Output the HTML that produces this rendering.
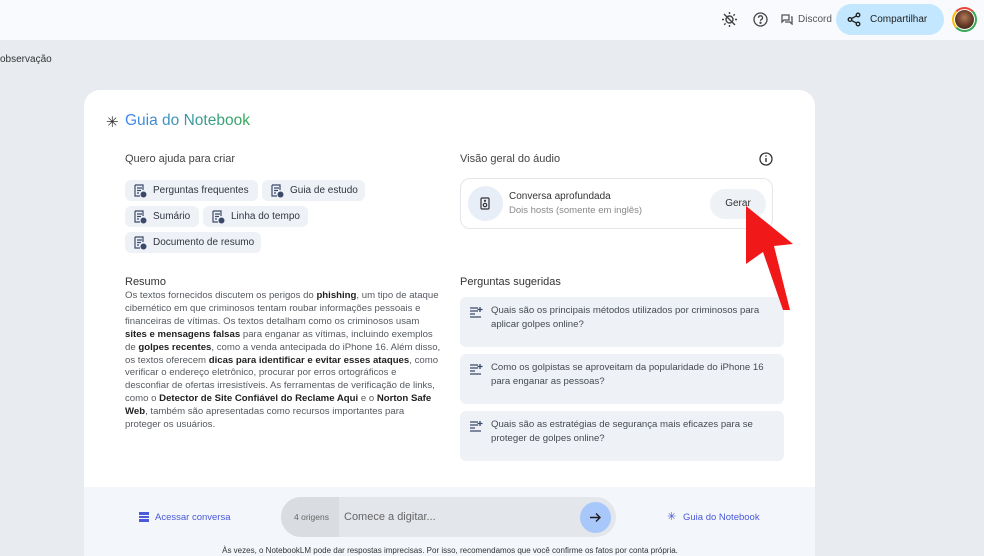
<!DOCTYPE html>
<html><head><meta charset="utf-8"><style>
*{box-sizing:border-box;margin:0;padding:0}
html,body{width:984px;height:556px;overflow:hidden}
body{background:#e8ebf0;font-family:"Liberation Sans",sans-serif;position:relative;color:#1f1f1f}
.hdr{position:absolute;left:0;top:0;width:984px;height:40px;background:#f8fafd}
.abs{position:absolute}
.card{position:absolute;left:84px;top:90px;width:731px;height:466px;background:#fff;border-radius:16px 16px 0 0;overflow:hidden}
.chip{position:absolute;height:21px;background:#eef1f6;border-radius:6px;font-size:10px;color:#303640;line-height:21px;padding-left:28px}
.chip svg{position:absolute;left:9px;top:4px}
.sum{position:absolute;left:125px;top:290px;font-size:9.6px;line-height:12.9px;color:#555a60;white-space:nowrap}
.sum b{color:#1f1f1f}
.q{position:absolute;left:460px;width:324px;height:50px;background:#eef1f6;border-radius:6px;font-size:9.6px;line-height:14px;color:#454a52;padding:7px 0 0 31px}
.q svg{position:absolute;left:9px;top:9px}
</style></head><body>
<div class="hdr"></div>
<svg class="abs" style="left:721px;top:11px" width="17" height="17" viewBox="0 0 17 17" fill="none" stroke="#444" stroke-width="1.4"><circle cx="8.5" cy="8.5" r="3.5"/><path d="M8.5 1v2M8.5 14v2M1 8.5h2M14 8.5h2M3.2 3.2l1.4 1.4M12.4 12.4l1.4 1.4M3.2 13.8l1.4-1.4M12.4 4.6l1.4-1.4M3 3l11 11"/></svg>
<svg class="abs" style="left:753px;top:12px" width="15" height="15" viewBox="0 0 15 15" fill="none" stroke="#444" stroke-width="1.3"><circle cx="7.5" cy="7.5" r="6.5"/><path d="M5.5 5.8a2 2 0 1 1 2.6 1.9c-.5.2-.6.6-.6 1.2"/><circle cx="7.5" cy="10.8" r=".5" fill="#444"/></svg>
<svg class="abs" style="left:781px;top:14px" width="12" height="11" viewBox="0 0 12 11" fill="none" stroke="#555" stroke-width="1.3"><path d="M1 1h7v5H3L1 8z M10 3h1v7l-2-2H4"/></svg>
<div class="abs" style="left:798px;top:13px;font-size:10px;line-height:13px;color:#555">Discord</div>
<div class="abs" style="left:836px;top:4px;width:108px;height:31px;border-radius:16px;background:#c2e7ff"></div>
<svg class="abs" style="left:847px;top:12px" width="14" height="15" viewBox="0 0 14 15" fill="none" stroke="#1f1f1f" stroke-width="1.3"><circle cx="11" cy="3" r="1.8"/><circle cx="3" cy="7.5" r="1.8"/><circle cx="11" cy="12" r="1.8"/><path d="M4.6 6.6l4.8-2.7M4.6 8.4l4.8 2.7"/></svg>
<div class="abs" style="left:870px;top:13px;font-size:10px;line-height:13px;color:#1f1f1f">Compartilhar</div>
<div class="abs" style="left:952px;top:7px;width:25px;height:25px;border-radius:50%;border:2px solid #34a853;border-top-color:#ea4335;border-left-color:#fbbc04;background:#fff;padding:1px"><div style="width:100%;height:100%;border-radius:50%;background:radial-gradient(circle at 50% 40%,#b07a5a 0,#6a3f2a 50%,#2a1a12 100%)"></div></div>
<div class="abs" style="left:0;top:54px;font-size:10px;color:#333">observação</div>

<div class="card">
<div class="abs" style="left:0;top:397px;width:731px;height:90px;background:#f3f6fb"></div>
</div>
<div class="abs" style="left:106px;top:113px;font-size:15px;color:#333">✳</div>
<div class="abs" style="left:125px;top:112px;font-size:15.5px;background:linear-gradient(90deg,#4285f4,#34a853);-webkit-background-clip:text;color:transparent">Guia do Notebook</div>
<div class="abs" style="left:125px;top:153px;font-size:11px;color:#444">Quero ajuda para criar</div>
<svg width="0" height="0" style="position:absolute"><defs><g id="doc"><path d="M1 1h8v5M1 1v11h5M3 4h5M3 6.5h4M3 9h2" fill="none" stroke="#3b4a6b" stroke-width="1.2"/><circle cx="9.5" cy="10.5" r="3" fill="#3b4a6b"/></g><g id="qi"><path d="M1 2h8M1 5h8M1 8h5M1 11h11M11 1v5M8.5 3.5h5" fill="none" stroke="#3b4a6b" stroke-width="1.3"/></g></defs></svg>
<div class="chip" style="left:125px;top:180px;width:133px"><svg width="14" height="14"><use href="#doc"/></svg>Perguntas frequentes</div>
<div class="chip" style="left:262px;top:180px;width:103px"><svg width="14" height="14"><use href="#doc"/></svg>Guia de estudo</div>
<div class="chip" style="left:125px;top:206px;width:74px"><svg width="14" height="14"><use href="#doc"/></svg>Sumário</div>
<div class="chip" style="left:203px;top:206px;width:105px"><svg width="14" height="14"><use href="#doc"/></svg>Linha do tempo</div>
<div class="chip" style="left:125px;top:232px;width:136px"><svg width="14" height="14"><use href="#doc"/></svg>Documento de resumo</div>

<div class="abs" style="left:125px;top:276px;font-size:11px;color:#333">Resumo</div>
<div class="sum">Os textos fornecidos discutem os perigos do <b>phishing</b>, um tipo de ataque<br>cibernético em que criminosos tentam roubar informações pessoais e<br>financeiras de vítimas. Os textos detalham como os criminosos usam<br><b>sites e mensagens falsas</b> para enganar as vítimas, incluindo exemplos<br>de <b>golpes recentes</b>, como a venda antecipada do iPhone 16. Além disso,<br>os textos oferecem <b>dicas para identificar e evitar esses ataques</b>, como<br>verificar o endereço eletrônico, procurar por erros ortográficos e<br>desconfiar de ofertas irresistíveis. As ferramentas de verificação de links,<br>como o <b>Detector de Site Confiável do Reclame Aqui</b> e o <b>Norton Safe<br>Web</b>, também são apresentadas como recursos importantes para<br>proteger os usuários.</div>

<div class="abs" style="left:460px;top:153px;font-size:11px;color:#444">Visão geral do áudio</div>
<svg class="abs" style="left:759px;top:152px" width="14" height="14" viewBox="0 0 14 14"><circle cx="7" cy="7" r="6" fill="none" stroke="#333" stroke-width="1.3"/><path d="M7 6v4" stroke="#333" stroke-width="1.4"/><circle cx="7" cy="4" r=".8" fill="#333"/></svg>
<div class="abs" style="left:460px;top:178px;width:313px;height:51px;border:1px solid #e3e6ea;border-radius:10px"></div>
<div class="abs" style="left:468px;top:186px;width:35px;height:35px;border-radius:50%;background:#e8eef8"></div>
<svg class="abs" style="left:480px;top:197px" width="10" height="13" viewBox="0 0 10 13" fill="none" stroke="#333" stroke-width="1.2"><rect x="1" y="1" width="8" height="11" rx="1"/><circle cx="5" cy="8" r="1.7"/><circle cx="5" cy="3.8" r=".5"/></svg>
<div class="abs" style="left:509px;top:191px;font-size:10px;color:#333">Conversa aprofundada</div>
<div class="abs" style="left:509px;top:205px;font-size:9.5px;color:#888">Dois hosts (somente em inglês)</div>
<div class="abs" style="left:710px;top:189px;width:56px;height:30px;border-radius:15px;background:#eef1f6;font-size:10px;color:#333;text-align:center;line-height:30px">Gerar</div>

<div class="abs" style="left:460px;top:276px;font-size:11px;color:#333">Perguntas sugeridas</div>
<div class="q" style="top:297px"><svg width="14" height="13"><use href="#qi"/></svg>Quais são os principais métodos utilizados por criminosos para<br>aplicar golpes online?</div>
<div class="q" style="top:354px"><svg width="14" height="13"><use href="#qi"/></svg>Como os golpistas se aproveitam da popularidade do iPhone 16<br>para enganar as pessoas?</div>
<div class="q" style="top:411px"><svg width="14" height="13"><use href="#qi"/></svg>Quais são as estratégias de segurança mais eficazes para se<br>proteger de golpes online?</div>

<svg class="abs" style="left:740px;top:206px" width="56" height="106" viewBox="0 0 56 106"><polygon points="6,0 53,38 34,40 50,104 43,104 23,46 6,58" fill="#f01818"/></svg>

<svg class="abs" style="left:139px;top:512px" width="10" height="10" viewBox="0 0 10 10" fill="#4a5ad8"><rect x="0" y="0" width="10" height="3"/><rect x="0" y="4" width="10" height="2"/><rect x="0" y="7" width="10" height="3"/></svg>
<div class="abs" style="left:155px;top:512px;font-size:9.5px;color:#4a5ad8">Acessar conversa</div>
<div class="abs" style="left:281px;top:497px;width:335px;height:40px;border-radius:20px;background:#e3e6eb"></div>
<div class="abs" style="left:281px;top:497px;width:58px;height:40px;border-radius:20px 0 0 20px;background:#d9dce1"></div>
<div class="abs" style="left:294px;top:512px;font-size:8.5px;color:#666">4 origens</div>
<div class="abs" style="left:344px;top:511px;font-size:11px;color:#666">Comece a digitar...</div>
<div class="abs" style="left:580px;top:502px;width:31px;height:31px;border-radius:50%;background:#a8c7fa"></div>
<svg class="abs" style="left:589px;top:511px" width="13" height="13" viewBox="0 0 13 13" fill="none" stroke="#1f1f1f" stroke-width="1.4"><path d="M1 6.5h10M7 2.5l4 4-4 4"/></svg>
<div class="abs" style="left:667px;top:510px;font-size:11px;color:#4a5ad8">✳</div>
<div class="abs" style="left:683px;top:512px;font-size:9.5px;color:#4a5ad8">Guia do Notebook</div>
<div class="abs" style="left:0;top:546px;width:900px;text-align:center;font-size:8px;color:#333">Às vezes, o NotebookLM pode dar respostas imprecisas. Por isso, recomendamos que você confirme os fatos por conta própria.</div>
</body></html>
